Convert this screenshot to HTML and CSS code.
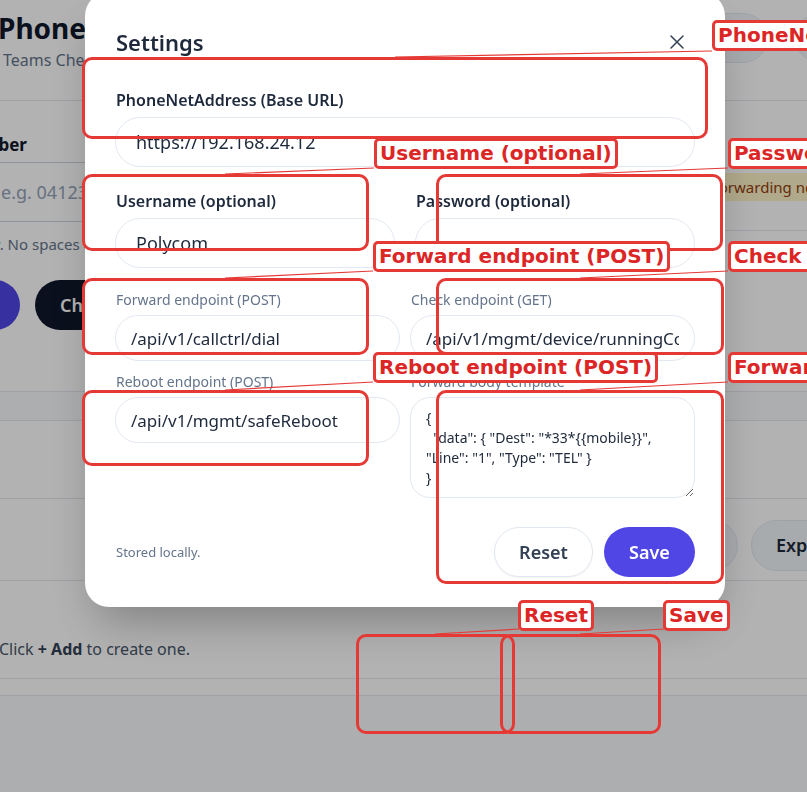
FILE: index.html
```html
<!DOCTYPE html>
<html lang="en">
<head>
<meta charset="utf-8">
<title>Settings</title>
<link rel="stylesheet" href="styles.css">
</head>
<body>
<div class="page">
  <header class="top">
    <div class="brand">
      <h1 class="title">Phone Forwarding</h1>
      <p class="subtitle">Teams Checker</p>
    </div>
    <div class="top-actions">
      <span class="pill pill-a"></span>
      <span class="pill pill-b"></span>
    </div>
  </header>
  <div class="content">
    <div class="form-col">
      <div class="num-label">Number</div>
      <div class="big-input">e.g. 0412345678</div>
      <p class="help">Digits only. No spaces or dashes.</p>
      <div class="actions">
        <span class="btn-indigo">Forward</span>
        <span class="btn-dark">Check status</span>
      </div>
    </div>
    <div class="side-col">
      <div class="notice">Forwarding not active</div>
      <div class="side-divider"></div>
    </div>
  </div>
  <div class="list">
    <div class="band"></div>
    <div class="thead"></div>
    <div class="trow"></div>
    <div class="trow tools">
      <span class="pill2 pill2-a">Import</span>
      <span class="pill2 pill2-b">Export</span>
    </div>
    <div class="trow empty">
      <span class="hint">(e.g. group)</span>
      <p class="empty-text">Click <b>+ Add</b> to create one.</p>
    </div>
    <div class="trow last"></div>
  </div>
</div>

<div class="overlay">
  <div class="modal">
    <div class="modal-head">
      <h2 class="modal-title">Settings</h2>
      <button class="close" type="button" aria-label="Close">
        <svg width="16" height="16" viewBox="0 0 16 16" fill="none" stroke="#334155" stroke-width="1.5" stroke-linecap="round"><path d="M2 2 L14 14 M14 2 L2 14"/></svg>
      </button>
    </div>

    <div class="field field-lg">
      <label>PhoneNetAddress (Base URL)</label>
      <input class="inp inp-lg" value="https://192.168.24.12">
    </div>

    <div class="grid2">
      <div class="field field-lg">
        <label>Username (optional)</label>
        <input class="inp inp-lg" value="Polycom">
      </div>
      <div class="field field-lg">
        <label>Password (optional)</label>
        <input class="inp inp-lg" type="password" value="">
      </div>
    </div>

    <div class="grid-ep">
      <div class="field field-sm">
        <label>Forward endpoint (POST)</label>
        <input class="inp inp-md" value="/api/v1/callctrl/dial">
      </div>
      <div class="field field-sm">
        <label>Check endpoint (GET)</label>
        <input class="inp inp-md" value="/api/v1/mgmt/device/runningConfig">
      </div>
      <div class="field field-sm">
        <label>Reboot endpoint (POST)</label>
        <input class="inp inp-md" value="/api/v1/mgmt/safeReboot">
      </div>
      <div class="field field-sm">
        <label>Forward body template</label>
        <textarea class="tpl">{
  "data": { "Dest": "*33*{{mobile}}", "Line": "1", "Type": "TEL" }
}</textarea>
      </div>
    </div>

    <div class="modal-foot">
      <span class="stored">Stored locally.</span>
      <div class="foot-btns">
        <button class="btn-reset" type="button">Reset</button>
        <button class="btn-save" type="button">Save</button>
      </div>
    </div>
  </div>
</div>

<div class="annotations">
  <svg class="ann-lines" width="807" height="792" viewBox="0 0 807 792">
    <g stroke="#e53935" stroke-width="1.2" fill="none">
      <line x1="712" y1="51" x2="395" y2="57"/>
      <line x1="374" y1="168" x2="225" y2="174"/>
      <line x1="728" y1="168" x2="580" y2="174"/>
      <line x1="373" y1="271" x2="225" y2="278"/>
      <line x1="728" y1="271" x2="580" y2="278"/>
      <line x1="373" y1="382" x2="225" y2="390"/>
      <line x1="728" y1="382" x2="580" y2="390"/>
      <line x1="519" y1="629" x2="435" y2="634"/>
      <line x1="664" y1="629" x2="580" y2="634"/>
    </g>
  </svg>

  <div class="ann-box" style="left:82px;top:57px;width:626px;height:82px"></div>
  <div class="ann-box" style="left:82px;top:174px;width:287px;height:77px"></div>
  <div class="ann-box" style="left:436px;top:174px;width:287px;height:77px"></div>
  <div class="ann-box" style="left:82px;top:278px;width:287px;height:77px"></div>
  <div class="ann-box" style="left:436px;top:278px;width:288px;height:77px"></div>
  <div class="ann-box" style="left:82px;top:390px;width:287px;height:76px"></div>
  <div class="ann-box" style="left:436px;top:390px;width:288px;height:194px"></div>
  <div class="ann-box" style="left:356px;top:634px;width:159px;height:100px"></div>
  <div class="ann-box" style="left:500px;top:634px;width:161px;height:100px"></div>

  <div class="ann-label" style="left:712px;top:20px">PhoneNetAddress (Base URL)</div>
  <div class="ann-label" style="left:374px;top:138px">Username (optional)</div>
  <div class="ann-label" style="left:728px;top:138px">Password (optional)</div>
  <div class="ann-label" style="left:373px;top:241px">Forward endpoint (POST)</div>
  <div class="ann-label" style="left:728px;top:241px">Check endpoint (GET)</div>
  <div class="ann-label" style="left:373px;top:352px">Reboot endpoint (POST)</div>
  <div class="ann-label" style="left:728px;top:352px">Forward body template</div>
  <div class="ann-label" style="left:518px;top:600px">Reset</div>
  <div class="ann-label" style="left:663px;top:600px">Save</div>
</div>
</body>
</html>
```

FILE: styles.css
```css
html, body {
  margin: 0;
  padding: 0;
}
body {
  width: 807px;
  height: 792px;
  overflow: hidden;
  background: #f8fafc;
  font-family: "Noto Sans", "Open Sans", sans-serif;
  color: #0f172a;
}

/* ---------- background page ---------- */
.page {
  width: 900px;
}
.top {
  height: 101px;
  box-sizing: border-box;
  border-bottom: 1px solid #e2e8f0;
  display: flex;
  justify-content: space-between;
  align-items: flex-start;
  background: #fff;
}
.brand {
  margin-left: -2px;
  padding-top: 10px;
}
.title {
  margin: 0;
  font-size: 28px;
  line-height: 36px;
  font-weight: 700;
  color: #0f172a;
}
.subtitle {
  margin: 2px 0 0 5px;
  font-size: 16px;
  line-height: 24px;
  color: #64748b;
}
.top-actions {
  display: flex;
  gap: 27px;
  padding-top: 13px;
  margin-right: 5px;
}
.pill {
  display: block;
  height: 50px;
  border-radius: 25px;
  background: #f1f5f9;
  border: 1px solid #e2e8f0;
  box-sizing: border-box;
}
.pill-a { width: 90px; }
.pill-b { width: 100px; }

.content {
  display: flex;
  background: #fff;
}
.form-col {
  width: 680px;
  padding-top: 32px;
}
.num-label {
  margin-left: -43px;
  font-size: 17px;
  line-height: 24px;
  font-weight: 700;
  color: #0f172a;
}
.big-input {
  margin-top: 5px;
  margin-left: -30px;
  height: 60px;
  box-sizing: border-box;
  border: 1px solid #cbd5e1;
  border-radius: 12px;
  padding-left: 30px;
  font-size: 18px;
  line-height: 58px;
  color: #94a3b8;
}
.help {
  margin: 12px 0 0 -74px;
  font-size: 15px;
  line-height: 20px;
  color: #64748b;
}
.actions {
  margin-top: 26px;
  display: flex;
  gap: 15px;
}
.btn-indigo, .btn-dark {
  height: 50px;
  border-radius: 25px;
  font-size: 18px;
  font-weight: 600;
  line-height: 50px;
  color: #fff;
}
.btn-indigo {
  width: 130px;
  margin-left: -110px;
  padding-left: 12px;
  box-sizing: border-box;
  background: #4f46e5;
}
.btn-dark {
  padding: 0 25px;
  background: #0f172a;
}
.side-col {
  flex: 1;
  padding-top: 72px;
}
.notice {
  height: 28px;
  background: #fef3c7;
  color: #92400e;
  font-size: 15px;
  line-height: 28px;
  padding-left: 31px;
}
.side-divider {
  margin-top: 29px;
  border-top: 1px solid #e2e8f0;
}

.list {
  background: #fff;
}
.band {
  height: 61px;
  border-bottom: 1px solid #e2e8f0;
}
.thead {
  height: 28px;
  border-bottom: 1px solid #e2e8f0;
  background: #f8fafc;
}
.trow {
  height: 77px;
  border-bottom: 1px solid #e2e8f0;
}
.tools {
  height: 82px;
  box-sizing: border-box;
  padding-top: 21px;
  display: flex;
  justify-content: flex-end;
  gap: 13px;
  padding-right: 39px;
}
.pill2 {
  height: 51px;
  box-sizing: border-box;
  border-radius: 26px;
  background: #f1f5f9;
  border: 1px solid #e2e8f0;
  font-size: 18px;
  font-weight: 600;
  line-height: 49px;
  color: #1e293b;
}
.pill2-a {
  width: 110px;
  color: transparent;
}
.pill2-b {
  width: 110px;
  padding-left: 24px;
}
.empty {
  height: 98px;
  box-sizing: border-box;
  padding-top: 3px;
}
.hint {
  display: block;
  margin-left: 372px;
  font-size: 16px;
  line-height: 24px;
  color: #475569;
}
.empty-text {
  margin: 29px 0 0 -1px;
  font-size: 16px;
  line-height: 24px;
  color: #475569;
}
.empty-text b {
  color: #334155;
}
.last {
  height: 16px;
}

/* ---------- overlay & modal ---------- */
.overlay {
  position: fixed;
  inset: 0;
  background: rgba(0, 0, 0, 0.3);
  display: flex;
  align-items: flex-start;
  padding-left: 85px;
}
.modal {
  width: 640px;
  box-sizing: border-box;
  margin-top: -8px;
  padding: 32px 30px 30px 30px;
  background: #fff;
  border-radius: 24px;
  box-shadow: 0 24px 48px -12px rgba(0, 0, 0, 0.3);
}
.modal-head {
  height: 36px;
  display: flex;
  align-items: center;
  justify-content: space-between;
  margin-bottom: 28px;
}
.modal-title {
  margin: 0 0 0 1px;
  font-size: 22px;
  line-height: 36px;
  font-weight: 600;
  color: #1e293b;
}
.close {
  width: 24px;
  height: 24px;
  margin-right: 6px;
  padding: 4px;
  border: 0;
  background: transparent;
  display: flex;
  align-items: center;
  justify-content: center;
}
.field label {
  display: block;
  margin-bottom: 5px;
}
.field-lg label {
  font-size: 16px;
  line-height: 24px;
  font-weight: 600;
  color: #1e293b;
  margin-left: 1px;
}
.field-sm label {
  font-size: 14px;
  line-height: 20px;
  font-weight: 400;
  color: #64748b;
  margin-left: 1px;
}
.inp {
  display: block;
  width: 100%;
  box-sizing: border-box;
  border: 1px solid #e2e8f0;
  border-radius: 999px;
  background: #fff;
  font-family: inherit;
  color: #1e293b;
  outline: none;
  margin: 0;
}
.inp-lg {
  height: 50px;
  padding: 0 20px;
  font-size: 18px;
}
.inp-md {
  height: 46px;
  padding: 0 15px;
  font-size: 17px;
}
.grid2 {
  margin-top: 22px;
  display: grid;
  grid-template-columns: 1fr 1fr;
  column-gap: 20px;
}
.grid-ep {
  margin-top: 22px;
  display: grid;
  grid-template-columns: 1fr 1fr;
  column-gap: 10px;
  row-gap: 11px;
  align-items: start;
}
.tpl {
  display: block;
  width: 100%;
  height: 101px;
  box-sizing: border-box;
  margin: 0;
  border: 1px solid #e2e8f0;
  border-radius: 20px;
  padding: 10px 15px;
  font-family: "Noto Sans", sans-serif;
  font-size: 14px;
  line-height: 20px;
  color: #1e293b;
  resize: vertical;
  outline: none;
  overflow: hidden;
}
.modal-foot {
  margin-top: 29px;
  height: 50px;
  display: flex;
  align-items: center;
  justify-content: space-between;
}
.stored {
  margin-left: 1px;
  font-size: 13px;
  color: #64748b;
}
.foot-btns {
  display: flex;
  gap: 11px;
}
.btn-reset, .btn-save {
  height: 50px;
  border-radius: 25px;
  font-family: inherit;
  font-size: 18px;
  font-weight: 600;
  cursor: pointer;
}
.btn-reset {
  width: 99px;
  background: #fff;
  border: 1px solid #e2e8f0;
  color: #334155;
  box-shadow: 0 1px 2px rgba(0, 0, 0, 0.05);
}
.btn-save {
  width: 91px;
  background: #4f46e5;
  border: 0;
  color: #fff;
}

/* ---------- annotation overlay ---------- */
.annotations {
  position: fixed;
  inset: 0;
  pointer-events: none;
}
.ann-lines {
  position: absolute;
  left: 0;
  top: 0;
}
.ann-box {
  position: absolute;
  box-sizing: border-box;
  border: 3px solid #e53935;
  border-radius: 10px;
}
.ann-label {
  position: absolute;
  white-space: nowrap;
  background: #fff;
  border: 3px solid #e53935;
  border-radius: 5px;
  padding: 1px 3px;
  font-family: "DejaVu Sans", sans-serif;
  font-weight: 700;
  font-size: 20px;
  line-height: 23px;
  color: #dc2626;
}
```
